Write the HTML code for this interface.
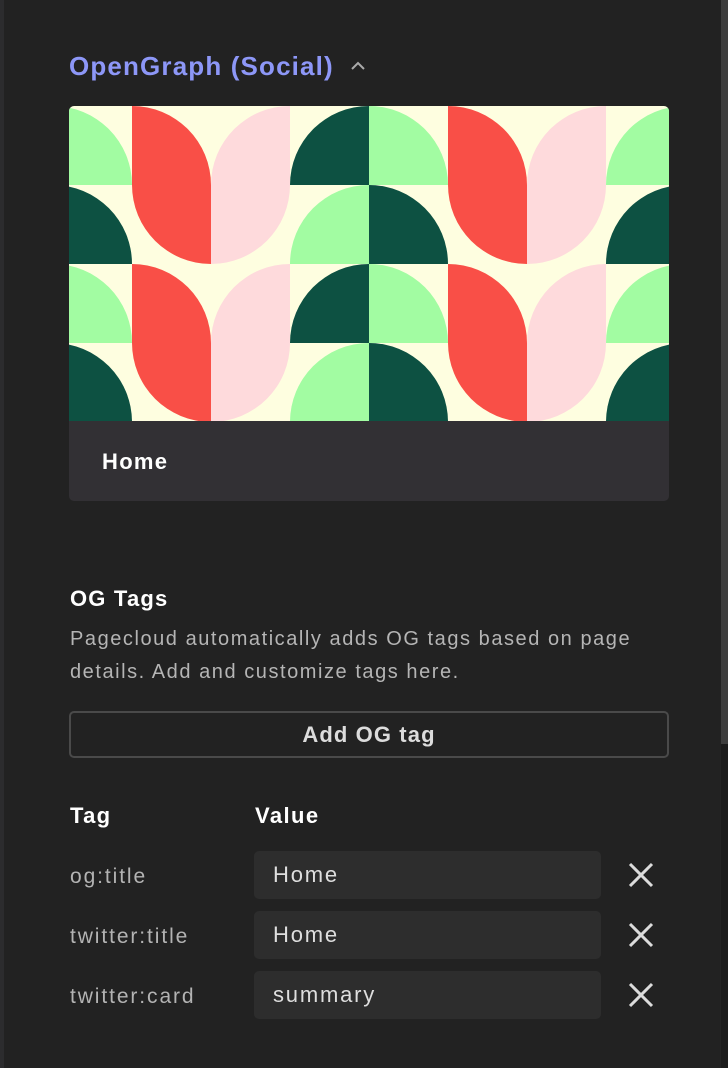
<!DOCTYPE html>
<html><head><meta charset="utf-8"><style>
*{margin:0;padding:0;box-sizing:border-box}
body{width:728px;height:1068px;background:#222222;font-family:"Liberation Sans",sans-serif;position:relative;overflow:hidden}
.a{position:absolute;white-space:nowrap}
.lbl{color:#b3b3b3;font-size:21px;letter-spacing:1.9px}
.inp{position:absolute;left:254px;width:347px;height:48px;background:#2d2d2d;border-radius:5px;color:#dedede;font-size:22px;letter-spacing:1.8px;line-height:48px;padding-left:19px}
.x{position:absolute;left:628px;width:26px;height:26px}
</style></head><body>
<div class="a" style="left:0;top:0;width:4px;height:1068px;background:#2c2c2e"></div>
<div class="a" style="left:721px;top:0;width:7px;height:744px;background:#3d3d3d"></div>
<div class="a" style="left:721px;top:744px;width:7px;height:324px;background:#1b1b1b"></div>

<div class="a" style="left:69px;top:50px;font-size:26px;font-weight:bold;color:#8d97f7;line-height:32px;letter-spacing:1.15px">OpenGraph (Social)</div>
<svg class="a" style="left:349px;top:59px" width="18" height="14" viewBox="0 0 18 14"><path d="M3 10 L9 4 L15 10" fill="none" stroke="#aaa" stroke-width="2"/></svg>

<div class="a" style="left:69px;top:106px;width:600px;height:395px;border-radius:5px;overflow:hidden;background:#323034">
<svg width="600" height="315" viewBox="0 0 600 315" style="display:block">
<rect width="600" height="315" fill="#fefee0"/>
<defs>
<path id="red" d="M0 0 L0 79 A79 79 0 0 0 79 158 L79 79 A79 79 0 0 0 0 0Z" fill="#f94f47"/>
<path id="pink" d="M79 0 L79 79 A79 79 0 0 1 0 158 L0 79 A79 79 0 0 1 79 0Z" fill="#fedadc"/>
<path id="qc" d="M0 79 A79 79 0 0 1 79 0 L79 79Z"/>
<path id="qd" d="M0 0 A79 79 0 0 1 79 79 L0 79Z"/>
</defs>
<g id="half">
<use href="#qd" x="-16" y="0" fill="#a2fca2"/>
<use href="#qd" x="-16" y="79" fill="#0d5142"/>
<use href="#red" x="63" y="0"/>
<use href="#pink" x="142" y="0"/>
<use href="#qc" x="221" y="0" fill="#0d5142"/>
<use href="#qc" x="221" y="79" fill="#a2fca2"/>
<use href="#qd" x="300" y="0" fill="#a2fca2"/>
<use href="#qd" x="300" y="79" fill="#0d5142"/>
<use href="#red" x="379" y="0"/>
<use href="#pink" x="458" y="0"/>
<use href="#qc" x="537" y="0" fill="#a2fca2"/>
<use href="#qc" x="537" y="79" fill="#0d5142"/>
</g>
<use href="#half" y="158"/>
</svg>
<div class="a" style="left:33px;top:343px;font-size:22px;font-weight:bold;color:#fff;letter-spacing:1.3px">Home</div>
</div>

<div class="a" style="left:70px;top:586px;font-size:22px;font-weight:bold;color:#fff;letter-spacing:1.2px">OG Tags</div>
<div class="a" style="left:70px;top:623px;font-size:20px;color:#b5b5b5;line-height:33px;letter-spacing:1.55px">Pagecloud automatically adds OG tags based on page<br>details. Add and customize tags here.</div>

<div class="a" style="left:69px;top:711px;width:600px;height:47px;border:2px solid #4a4a4a;border-radius:5px;color:#dcdcdc;font-size:22px;font-weight:bold;text-align:center;line-height:44px;letter-spacing:1.1px">Add OG tag</div>

<div class="a" style="left:70px;top:803px;font-size:22px;font-weight:bold;color:#fff;letter-spacing:1.3px">Tag</div>
<div class="a" style="left:255px;top:803px;font-size:22px;font-weight:bold;color:#fff;letter-spacing:1.4px">Value</div>

<div class="a lbl" style="left:70px;top:865px">og:title</div>
<div class="inp" style="top:851px">Home</div>
<div class="a lbl" style="left:70px;top:925px">twitter:title</div>
<div class="inp" style="top:911px">Home</div>
<div class="a lbl" style="left:70px;top:985px">twitter:card</div>
<div class="inp" style="top:971px">summary</div>

<svg class="x" style="top:862px" viewBox="0 0 26 26"><path d="M2 2L24 24M24 2L2 24" stroke="#dcdcdc" stroke-width="3"/></svg>
<svg class="x" style="top:922px" viewBox="0 0 26 26"><path d="M2 2L24 24M24 2L2 24" stroke="#dcdcdc" stroke-width="3"/></svg>
<svg class="x" style="top:982px" viewBox="0 0 26 26"><path d="M2 2L24 24M24 2L2 24" stroke="#dcdcdc" stroke-width="3"/></svg>
</body></html>
